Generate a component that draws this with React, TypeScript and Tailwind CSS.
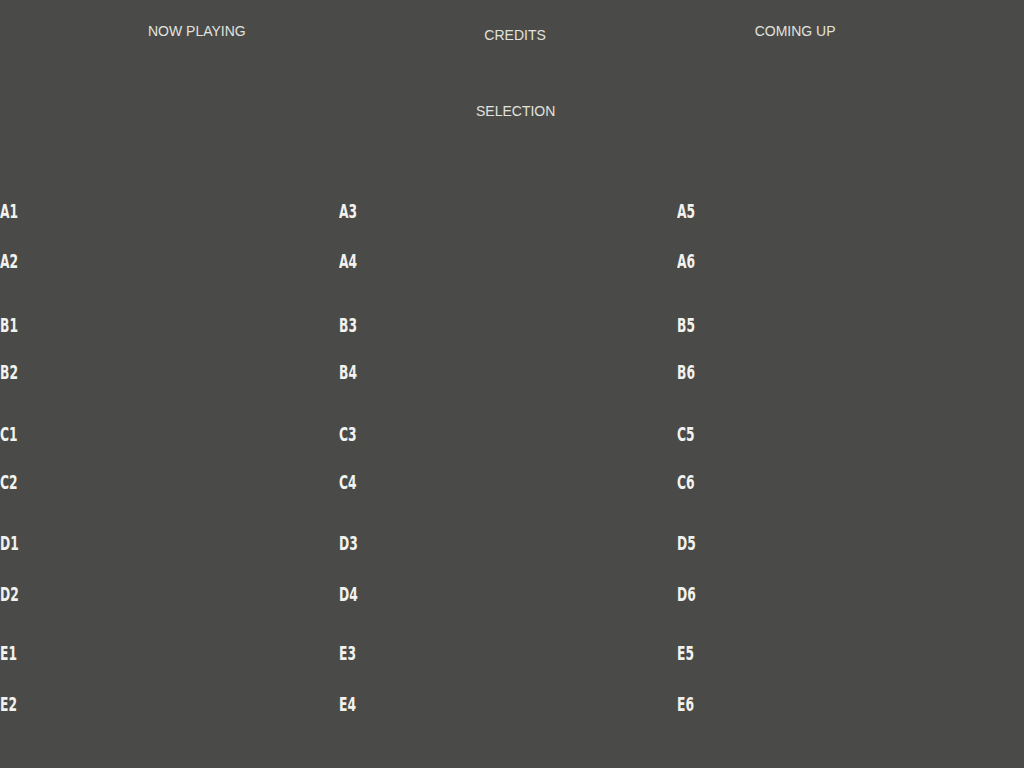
const rows = [
  ['A1', 'A3', 'A5'],
  ['A2', 'A4', 'A6'],
  ['B1', 'B3', 'B5'],
  ['B2', 'B4', 'B6'],
  ['C1', 'C3', 'C5'],
  ['C2', 'C4', 'C6'],
  ['D1', 'D3', 'D5'],
  ['D2', 'D4', 'D6'],
  ['E1', 'E3', 'E5'],
  ['E2', 'E4', 'E6'],
]

// gap above each row, after the first
const gaps = ['', 'mt-[31px]', 'mt-[45px]', 'mt-[28px]', 'mt-[43px]', 'mt-[29px]', 'mt-[42px]', 'mt-[32px]', 'mt-[40px]', 'mt-[32px]']

function Slot({ code }: { code: string }) {
  return (
    <span
      className="inline-block origin-left scale-x-[0.72] text-[19px] font-bold leading-none text-[#f2f2ee]"
      style={{ fontFamily: '"DejaVu Sans Condensed", "DejaVu Sans", sans-serif' }}
    >
      {code}
    </span>
  )
}

export default function App() {
  return (
    <div
      className="h-[768px] w-[1024px] overflow-hidden bg-[#4a4b48] text-[#e2e2de]"
      style={{ fontFamily: '"Liberation Sans", Arial, sans-serif' }}
    >
      {/* Header */}
      <div className="grid grid-cols-3 pt-[24px] text-[14px] leading-none">
        <div className="pl-[148px]">NOW PLAYING</div>
        <div className="pl-[143px] pt-[4px]">CREDITS</div>
        <div className="pl-[72px]">COMING UP</div>
      </div>

      <div className="mt-[62px] pl-[476px] text-[14px] leading-none">SELECTION</div>

      {/* Selection grid */}
      <div className="mt-[84px] flex flex-col">
        {rows.map((row, i) => (
          <div key={row[0]} className={'grid grid-cols-[339px_338px_1fr] ' + gaps[i]}>
            {row.map((c) => (
              <Slot key={c} code={c} />
            ))}
          </div>
        ))}
      </div>
    </div>
  )
}
